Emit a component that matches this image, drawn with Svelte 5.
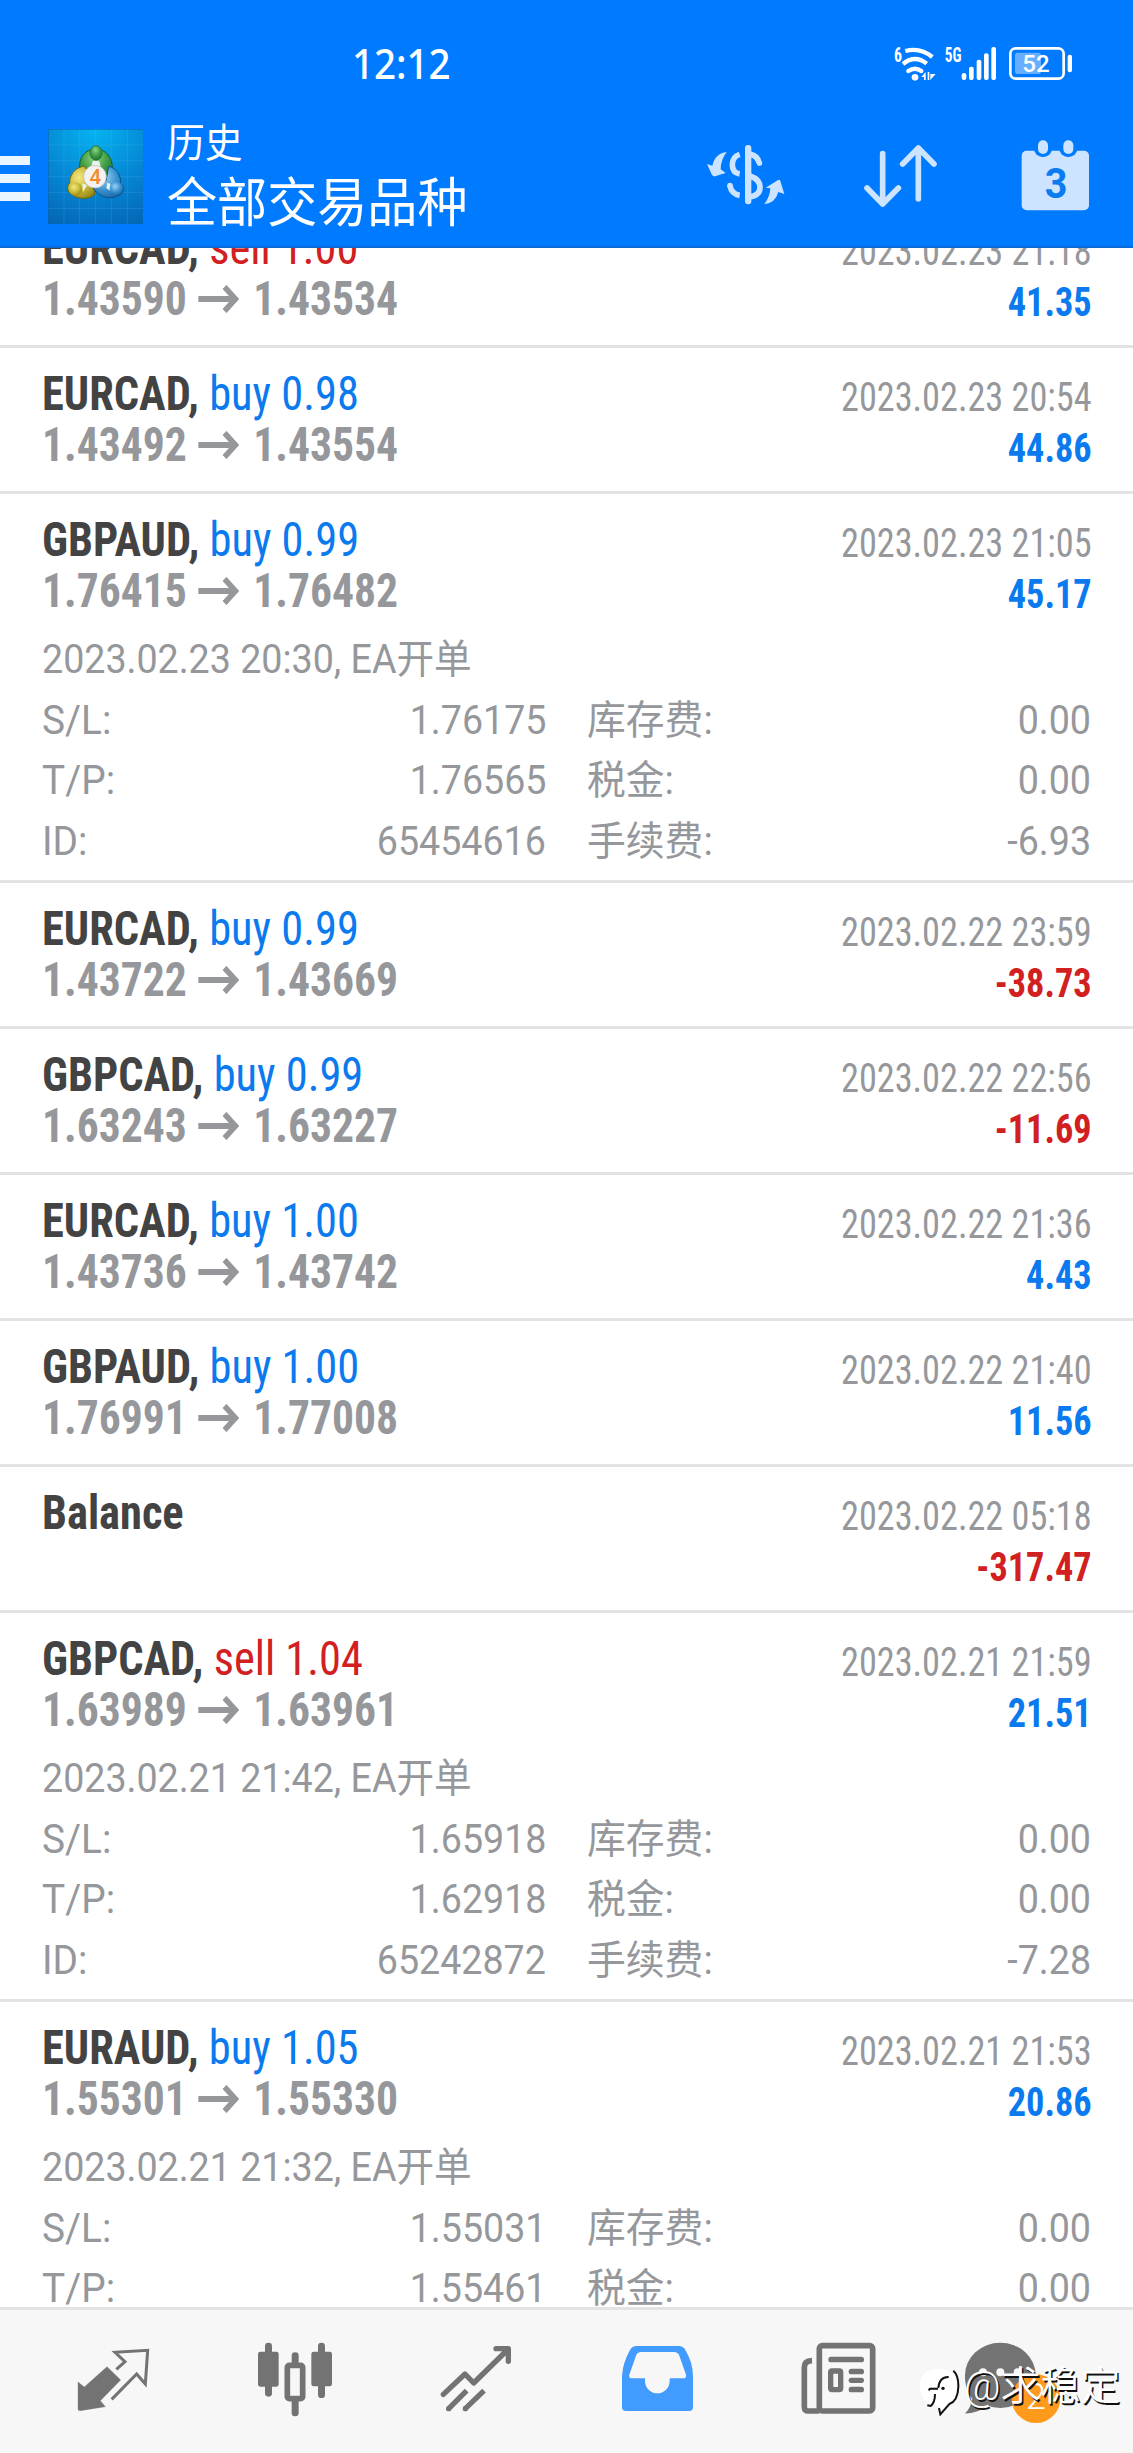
<script>
    const deals = [
        { symbol: 'EURCAD', side: 'sell', volume: '1.00', open: '1.43590', close: '1.43534', time: '2023.02.23 21:18', profit: '41.35' },
        { symbol: 'EURCAD', side: 'buy', volume: '0.98', open: '1.43492', close: '1.43554', time: '2023.02.23 20:54', profit: '44.86' },
        {
            symbol: 'GBPAUD', side: 'buy', volume: '0.99', open: '1.76415', close: '1.76482', time: '2023.02.23 21:05', profit: '45.17',
            note: '2023.02.23 20:30, EA开单',
            details: [
                ['S/L:', '1.76175', '库存费:', '0.00'],
                ['T/P:', '1.76565', '税金:', '0.00'],
                ['ID:', '65454616', '手续费:', '-6.93']
            ]
        },
        { symbol: 'EURCAD', side: 'buy', volume: '0.99', open: '1.43722', close: '1.43669', time: '2023.02.22 23:59', profit: '-38.73' },
        { symbol: 'GBPCAD', side: 'buy', volume: '0.99', open: '1.63243', close: '1.63227', time: '2023.02.22 22:56', profit: '-11.69' },
        { symbol: 'EURCAD', side: 'buy', volume: '1.00', open: '1.43736', close: '1.43742', time: '2023.02.22 21:36', profit: '4.43' },
        { symbol: 'GBPAUD', side: 'buy', volume: '1.00', open: '1.76991', close: '1.77008', time: '2023.02.22 21:40', profit: '11.56' },
        { symbol: 'Balance', time: '2023.02.22 05:18', profit: '-317.47' },
        {
            symbol: 'GBPCAD', side: 'sell', volume: '1.04', open: '1.63989', close: '1.63961', time: '2023.02.21 21:59', profit: '21.51',
            note: '2023.02.21 21:42, EA开单',
            details: [
                ['S/L:', '1.65918', '库存费:', '0.00'],
                ['T/P:', '1.62918', '税金:', '0.00'],
                ['ID:', '65242872', '手续费:', '-7.28']
            ]
        },
        {
            symbol: 'EURAUD', side: 'buy', volume: '1.05', open: '1.55301', close: '1.55330', time: '2023.02.21 21:53', profit: '20.86',
            note: '2023.02.21 21:32, EA开单',
            details: [
                ['S/L:', '1.55031', '库存费:', '0.00'],
                ['T/P:', '1.55461', '税金:', '0.00']
            ]
        }
    ];
</script>

<main>
    <header>
        <div class="status">
            <span class="clock">12:12</span>
            <svg class="indicators" viewBox="0 0 600 180" fill="#fff">
                <text class="net" x="27" y="80" textLength="24" lengthAdjust="spacingAndGlyphs">6</text>
                <g fill="none" stroke="#fff" stroke-width="13">
                    <path d="M61 48Q106 36 142 66" />
                    <path d="M54 87Q90 58 125 86" />
                    <path d="M70 108Q90 94 109 108" stroke-linecap="round" />
                </g>
                <circle cx="90" cy="127" r="10" />
                <path d="M109 126l13-15v24h-5v-9zM128 111h5v24h-5zM136 135v-18h16z" />
                <text class="net" x="179" y="80" textLength="50" lengthAdjust="spacingAndGlyphs">5G</text>
                <rect x="230" y="114" width="14" height="21" rx="7" />
                <rect x="252" y="95" width="14" height="40" rx="6" />
                <rect x="275" y="74" width="14" height="61" rx="6" />
                <rect x="297" y="55" width="14" height="80" rx="6" />
                <rect x="319" y="36" width="14" height="99" rx="6" />
                <rect x="376" y="40" width="160" height="91" rx="16" fill="none" stroke="#fff" stroke-width="8" />
                <rect x="390" y="53" width="78" height="64" rx="7" opacity="0.4" />
                <rect x="548" y="59" width="13" height="53" rx="6" />
                <text class="level" x="412" y="111" textLength="82" lengthAdjust="spacingAndGlyphs">52</text>
            </svg>
        </div>

        <div class="toolbar">
            <div class="menu"><i></i><i></i><i></i></div>
            <svg class="logo" viewBox="24 28 285 285">
                <defs>
                    <radialGradient id="sky" cx="0.5" cy="0" r="1.1">
                        <stop offset="0" stop-color="#05b4f0" />
                        <stop offset="0.5" stop-color="#058ad6" />
                        <stop offset="1" stop-color="#0466b6" />
                    </radialGradient>
                    <radialGradient id="green" cx="0.45" cy="0.3" r="0.8">
                        <stop offset="0" stop-color="#8fd383" />
                        <stop offset="0.5" stop-color="#3f9c44" />
                        <stop offset="1" stop-color="#146c27" />
                    </radialGradient>
                    <radialGradient id="yellow" cx="0.4" cy="0.35" r="0.8">
                        <stop offset="0" stop-color="#f2e884" />
                        <stop offset="0.5" stop-color="#c9b935" />
                        <stop offset="1" stop-color="#85770f" />
                    </radialGradient>
                    <radialGradient id="blue" cx="0.4" cy="0.35" r="0.8">
                        <stop offset="0" stop-color="#9ad3f5" />
                        <stop offset="0.5" stop-color="#3a93d0" />
                        <stop offset="1" stop-color="#12599c" />
                    </radialGradient>
                </defs>
                <rect x="24" y="28" width="285" height="285" fill="url(#sky)" />
                <path d="M72 28v285M119 28v285M167 28v285M214 28v285M262 28v285M24 76h285M24 123h285M24 171h285M24 218h285M24 266h285" stroke="#5fc0f0" stroke-width="2" opacity="0.3" />
                <path d="M25 312V29h283" fill="none" stroke="#0a62ad" stroke-width="2" />
                <path d="M119 150c-4-38 18-62 48-62s52 26 50 60c0 18-8 30-20 36l-66-12z" fill="url(#green)" stroke="#195f2a" stroke-width="3" />
                <path d="M133 140c-14 0-44 14-44 50-10 10-8 26 6 34 18 16 50 16 68 2l4-40z" fill="url(#yellow)" stroke="#6f6512" stroke-width="3" />
                <path d="M206 140c22 4 38 28 36 52 12 10 10 28-4 34-30 18-66 6-84-30l44-12z" fill="url(#blue)" stroke="#0e4f8c" stroke-width="3" />
                <path d="M159 123h18l5 16h-28zM127 191l14 6-12 20zM202 189l9 3 2 22-14-8z" fill="#e7f4ef" />
                <ellipse cx="168" cy="100" rx="18" ry="22" fill="url(#green)" stroke="#1b6b2a" stroke-width="2" />
                <circle cx="106" cy="208" r="20" fill="url(#yellow)" />
                <circle cx="229" cy="206" r="20" fill="url(#blue)" />
                <circle cx="165" cy="171" r="34" fill="#f3f2f1" stroke="#b9b9b5" stroke-width="2" />
                <text class="four" x="166" y="193" text-anchor="middle">4</text>
            </svg>
            <div class="titles">
                <div class="section">历史</div>
                <div class="filter">全部交易品种</div>
            </div>
            <svg class="act currency" viewBox="0 -15 300 270" fill="#cce4ff">
                <rect x="135" y="30" width="19" height="178" rx="9" />
                <g fill="none" stroke="#cce4ff" stroke-width="17">
                    <path d="M119 58Q97 65 97 89T119 117" />
                    <path d="M152 58Q171 61 178 84" stroke-linecap="round" />
                    <path d="M90 152Q94 177 119 181" stroke-linecap="butt" />
                    <path d="M150 123Q180 133 180 157T150 186" />
                </g>
                <circle cx="90" cy="152" r="8.5" />
                <path d="M80 51Q46 54 37 92L21 87 35 118Q38 125 45 124L77 114 62 103Q62 75 80 51Z" />
                <path d="M193 208Q210 185 211 160L197 158 233 136Q238 132 241 138L253 177 235 171Q226 204 193 208Z" />
            </svg>
            <svg class="act sort" viewBox="0 0 270 270" fill="none" stroke="#cce4ff" stroke-width="17" stroke-linecap="round" stroke-linejoin="round">
                <path d="M83 71V222M36 174L83 222 130 174" />
                <path d="M190 206V54M143 102L190 54 237 102" />
            </svg>
            <svg class="act calendar" viewBox="480 0 240 270">
                <rect x="500" y="62" width="202" height="179" rx="15" fill="#cce4ff" />
                <rect x="536" y="24" width="56" height="57" rx="27" fill="#007aff" />
                <rect x="612" y="24" width="56" height="57" rx="27" fill="#007aff" />
                <rect x="549" y="31" width="30" height="41" rx="15" fill="#cce4ff" />
                <rect x="625" y="31" width="30" height="41" rx="15" fill="#cce4ff" />
                <text class="day" x="569" y="203" textLength="68" lengthAdjust="spacingAndGlyphs">3</text>
            </svg>
        </div>
    </header>

    <section class="list">
        {#each deals as deal}
            <article>
                <div class="head">
                    <div class="left">
                        {#if deal.side}
                            <div class="title"><b>{deal.symbol},</b> <span class={deal.side}>{deal.side} {deal.volume}</span></div>
                            <div class="prices">
                                {deal.open}
                                <svg class="arrow" viewBox="0 0 48 28"><path d="M0 14H42M29 2L41 14 29 26" /></svg>
                                {deal.close}
                            </div>
                        {:else}
                            <div class="title"><b>{deal.symbol}</b></div>
                        {/if}
                    </div>
                    <div class="right">
                        <div class="time">{deal.time}</div>
                        <div class="profit" class:loss={deal.profit.startsWith('-')}>{deal.profit}</div>
                    </div>
                </div>
                {#if deal.note}
                    <div class="details">
                        <div class="note">{deal.note}</div>
                        {#each deal.details as [name, value, fee, amount]}
                            <div class="line">
                                <p><span class="name">{name}</span><span class="value">{value}</span></p>
                                <p><span class="name">{fee}</span><span class="value">{amount}</span></p>
                            </div>
                        {/each}
                    </div>
                {/if}
            </article>
        {/each}
    </section>

    <nav>
        <svg viewBox="0 0 270 270">
            <path d="M114 104L155 144 94 206 109 224 34 236Q27 237 27 230V150L46 165Z" stroke="#737373" stroke-width="1" />
            <path d="M142 112L168 89 138 61 236 55 229 156 203 126 128 202" fill="none" stroke="#737373" stroke-width="9" />
        </svg>
        <svg viewBox="0 0 270 270">
            <rect x="24" y="59" width="62" height="105" rx="7" />
            <rect x="45" y="32" width="21" height="162" rx="10" />
            <rect x="112" y="100" width="46" height="100" rx="6" fill="none" stroke="#737373" stroke-width="17" />
            <rect x="125" y="61" width="21" height="46" rx="10" />
            <rect x="125" y="196" width="21" height="57" rx="10" />
            <rect x="184" y="59" width="62" height="104" rx="7" />
            <rect x="204" y="32" width="21" height="166" rx="10" />
        </svg>
        <svg viewBox="0 0 270 270" class="stroked">
            <path d="M37 187L102 126 128 153 229 54M195 50H232V88" stroke-linecap="round" stroke-linejoin="round" />
            <path d="M53 230L107 176M103 230L159 176" />
            <path d="M53 230h0M103 230h0" stroke-linecap="round" />
        </svg>
        <svg viewBox="0 0 270 270" class="active">
            <path fill-rule="evenodd" d="M72 42H202Q212 42 218 50 243 92 243 132V225Q243 237 231 237H42Q30 237 30 225V132Q32 92 56 50 62 42 72 42ZM88 60Q76 60 72 71L52 128Q50 139 60 139H99V147a37 37 0 0 0 74 0V139H214Q224 139 222 128L202 71Q198 60 186 60Z" />
        </svg>
        <svg viewBox="0 0 270 270">
            <rect x="79" y="41" width="160" height="196" rx="9" fill="none" stroke="#737373" stroke-width="17" />
            <path d="M57 86Q34 87 34 106V224Q34 237 46 237H79" fill="none" stroke="#737373" stroke-width="17" />
            <rect x="106" y="74" width="107" height="17" rx="8" />
            <rect x="113" y="117" width="30" height="56" rx="4" fill="none" stroke="#737373" stroke-width="16" />
            <rect x="167" y="110" width="46" height="17" rx="8" />
            <rect x="167" y="137" width="46" height="16" rx="8" />
            <rect x="167" y="164" width="46" height="17" rx="8" />
        </svg>
        <svg viewBox="0 0 270 270">
            <ellipse cx="79" cy="130" rx="106" ry="98" />
            <path d="M-27 130C-27 170-14 190-5 200Q-10 228-27 244 10 246 40 220Z" />
            <circle cx="27" cy="121" r="12" fill="#f7f7f7" />
            <circle cx="79" cy="121" r="12" fill="#f7f7f7" />
            <circle cx="131" cy="121" r="12" fill="#f7f7f7" />
            <circle cx="186" cy="200" r="73" fill="#ff9a1c" />
            <text class="count" x="186" y="232" text-anchor="middle">2</text>
        </svg>
    </nav>

    <div class="watermark">
        <svg viewBox="0 0 132 150">
            <path d="M6 60Q6 9 60 9T116 58Q116 112 84 118L66 138 60 118Q6 116 6 60Z" fill="#fff" />
            <g fill="none" stroke="#111" stroke-width="6">
                <path d="M106 14Q122 28 121 62 120 104 94 114L67 145 63 126" />
                <path d="M92 33Q64 32 61 66M32 73L36 68H60M51 84Q51 110 38 120L28 118" />
            </g>
            <circle cx="75" cy="67" r="5" fill="#111" />
        </svg>
        <span>@求稳定</span>
    </div>
</main>

<style>
    :global(body) {
        margin: 0;
        background: #fff;
    }

    main {
        position: relative;
        display: flex;
        flex-direction: column;
        width: 1133px;
        height: 2453px;
        overflow: hidden;
        font-family: Roboto, "Noto Sans CJK SC", sans-serif;
        color: #95979b;
    }

    header {
        box-sizing: border-box;
        height: 248px;
        background: #007aff;
        border-bottom: 2px solid #0b6bd6;
        color: #fff;
    }

    .status {
        display: flex;
        height: 125px;
    }

    .clock {
        width: 533px;
        padding: 38px 0 0 352px;
        font: 500 41px/50px "Noto Sans", sans-serif;
        transform: scaleX(0.94);
        transform-origin: 352px 0;
    }

    .indicators {
        width: 200px;
        height: 60px;
        margin-top: 35px;
        flex: none;
    }

    .net {
        font: 700 60px Roboto, sans-serif;
        font-stretch: 75%;
    }

    .level {
        font: 500 72px Roboto, sans-serif;
    }

    .toolbar {
        display: flex;
        align-items: flex-start;
    }

    .menu {
        display: flex;
        flex-direction: column;
        gap: 9px;
        width: 30px;
        margin: 31px 18px 0 0;
    }

    .menu i {
        height: 9px;
        background: #eaf6ff;
    }

    .logo {
        width: 95px;
        height: 95px;
        margin-top: 4px;
    }

    .four {
        font: 500 62px Roboto, sans-serif;
        fill: #f08a2c;
    }

    .titles {
        flex: 1;
        margin-left: 24px;
        white-space: nowrap;
        transform: scaleX(0.945);
        transform-origin: 0 0;
    }

    .section {
        font-size: 40px;
        line-height: 38px;
    }

    .filter {
        font-size: 53px;
        line-height: 82px;
    }

    .act {
        height: 90px;
        margin-top: 5px;
    }

    .currency {
        width: 100px;
        margin-right: 55px;
    }

    .sort {
        width: 90px;
        margin-right: 70px;
    }

    .calendar {
        width: 80px;
        margin-right: 38px;
    }

    .day {
        font: 700 130px Roboto, sans-serif;
        fill: #0b7cf0;
    }

    .list {
        flex: 1;
        min-height: 0;
        overflow: hidden;
    }

    article {
        border-bottom: 3px solid #e3e3e3;
    }

    article:first-child {
        margin-top: -46px;
    }

    .head {
        display: flex;
        justify-content: space-between;
        box-sizing: border-box;
        height: 143px;
        padding: 21px 41px 0 42px;
        font-stretch: 75%;
        white-space: nowrap;
    }

    .left {
        font-size: 48px;
    }

    .title {
        line-height: 50px;
        transform: scaleX(0.926);
        transform-origin: 0 0;
    }

    .title b {
        color: #434343;
    }

    .buy {
        color: #0a7aee;
    }

    .sell {
        color: #d1201f;
    }

    .prices {
        font-weight: 700;
        line-height: 51px;
        transform: scaleX(0.908);
        transform-origin: 0 0;
    }

    .arrow {
        width: 48px;
        height: 28px;
        margin: 0 2px 0 1px;
        vertical-align: 2px;
        fill: none;
        stroke: #95979b;
        stroke-width: 6;
    }

    .right {
        padding-top: 3px;
        font-size: 40px;
        line-height: 51px;
        text-align: right;
        transform: scaleX(0.906);
        transform-origin: 100% 0;
    }

    .profit {
        font-weight: 700;
        color: #0a7aee;
    }

    .loss {
        color: #d1201f;
    }

    .details {
        margin-top: -7px;
        padding: 0 42px 8px;
        font-size: 40px;
        line-height: 60.5px;
        white-space: nowrap;
    }

    .note {
        transform: scaleX(0.94);
        transform-origin: 0 0;
    }

    .line {
        display: grid;
        grid-template-columns: 1fr 1fr;
        gap: 41px;
    }

    .line p {
        display: flex;
        justify-content: space-between;
        margin: 0;
    }

    .name {
        transform: scaleX(0.97);
        transform-origin: 0 0;
    }

    .value {
        transform: scaleX(0.94);
        transform-origin: 100% 0;
    }

    nav {
        display: grid;
        grid-template-columns: repeat(6, 181px);
        justify-items: center;
        box-sizing: border-box;
        height: 146px;
        padding: 22px 0 0 23px;
        background: #f7f7f7;
        border-top: 3px solid #e3e3e3;
    }

    nav svg {
        width: 90px;
        height: 90px;
        fill: #737373;
        overflow: visible;
    }

    nav .stroked {
        fill: none;
        stroke: #737373;
        stroke-width: 16;
    }

    nav .active {
        fill: #429bff;
    }

    nav .count {
        font: 300 108px Roboto, sans-serif;
        fill: #fff;
    }

    .watermark {
        position: absolute;
        left: 918px;
        top: 2366px;
        display: flex;
        color: #fff;
        font-size: 40px;
        font-weight: 350;
        line-height: 42px;
        white-space: nowrap;
        text-shadow: 1.5px 1.5px 0 #111;
    }

    .watermark svg {
        width: 44px;
        height: 50px;
        margin-right: 2px;
    }
</style>
